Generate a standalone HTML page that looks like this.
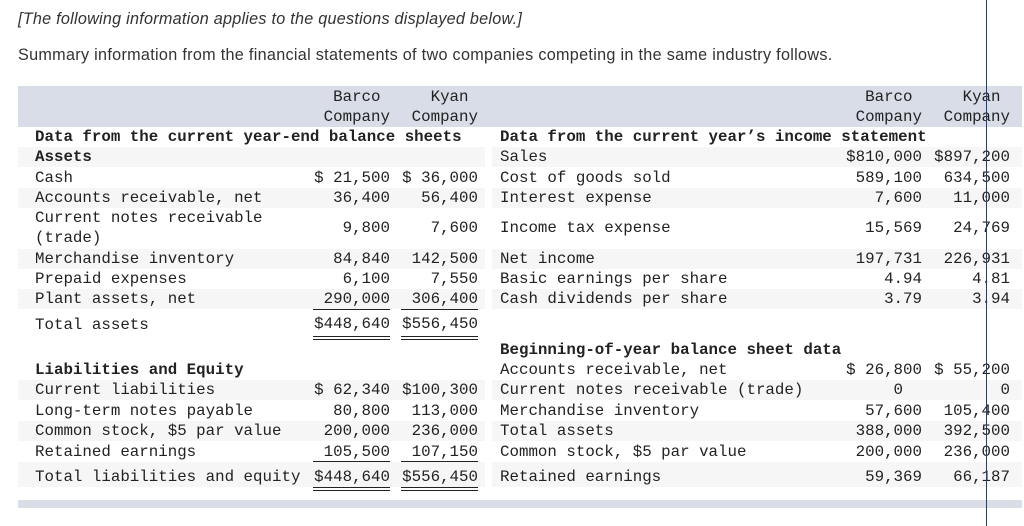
<!DOCTYPE html>
<html><head><meta charset="utf-8"><style>
body{margin:0;width:1024px;height:526px;background:#fff;position:relative;overflow:hidden;font-family:"Liberation Mono",monospace;font-size:15.8px;color:#222}
div,span{position:absolute}
.t{line-height:20px;white-space:pre}
.r{text-align:right;line-height:20px;white-space:pre}
.b{font-weight:bold}
.band{background:#d9dde8}
.sh{background:#f6f6f6;height:20px}
.u{border-top:1px solid #222;height:0}
.d{border-top:1px solid #222;border-bottom:1px solid #222;height:2px}
.s{font-family:"Liberation Sans",sans-serif;color:#333;white-space:nowrap}
</style></head><body>
<div class="s" style="left:18px;top:10px;font-size:16.2px;letter-spacing:0.25px;font-style:italic">[The following information applies to the questions displayed below.]</div>
<div class="s" style="left:18px;top:46px;font-size:16.2px;letter-spacing:0.3px">Summary information from the financial statements of two companies competing in the same industry follows.</div>

<div class="band" style="left:18px;top:86px;width:1004px;height:41px"></div>
<div class="band" style="left:18px;top:500px;width:1004px;height:8px"></div>

<div class="sh" style="left:18px;top:147px;width:467px"></div>
<div class="sh" style="left:18px;top:188px;width:467px"></div>
<div class="sh" style="left:18px;top:249px;width:467px"></div>
<div class="sh" style="left:18px;top:289px;width:467px"></div>
<div class="sh" style="left:18px;top:380px;width:467px"></div>
<div class="sh" style="left:18px;top:421px;width:467px"></div>
<div class="sh" style="left:18px;top:462px;width:467px;height:25px"></div>
<div class="sh" style="left:492px;top:147px;width:530px"></div>
<div class="sh" style="left:492px;top:188px;width:530px"></div>
<div class="sh" style="left:492px;top:249px;width:530px"></div>
<div class="sh" style="left:492px;top:289px;width:530px"></div>
<div class="sh" style="left:492px;top:380px;width:530px"></div>
<div class="sh" style="left:492px;top:421px;width:530px"></div>
<div class="sh" style="left:492px;top:462px;width:530px;height:25px"></div>

<div class="r" style="right:634px;top:87px">Barco </div>
<div class="r" style="right:546px;top:87px">Kyan </div>
<div class="r" style="right:634px;top:107px">Company</div>
<div class="r" style="right:546px;top:107px">Company</div>
<div class="r" style="right:102px;top:87px">Barco </div>
<div class="r" style="right:14px;top:87px">Kyan </div>
<div class="r" style="right:102px;top:107px">Company</div>
<div class="r" style="right:14px;top:107px">Company</div>

<div class="t b" style="left:35px;top:127px">Data from the current year-end balance sheets</div>
<div class="t b" style="left:35px;top:147px">Assets</div>
<div class="t" style="left:35px;top:168px">Cash</div>
<div class="r" style="right:634px;top:168px">$ 21,500</div><div class="r" style="right:546px;top:168px">$ 36,000</div>
<div class="t" style="left:35px;top:188px">Accounts receivable, net</div>
<div class="r" style="right:634px;top:188px">36,400</div><div class="r" style="right:546px;top:188px">56,400</div>
<div class="t" style="left:35px;top:208px">Current notes receivable
(trade)</div>
<div class="r" style="right:634px;top:218px">9,800</div><div class="r" style="right:546px;top:218px">7,600</div>
<div class="t" style="left:35px;top:249px">Merchandise inventory</div>
<div class="r" style="right:634px;top:249px">84,840</div><div class="r" style="right:546px;top:249px">142,500</div>
<div class="t" style="left:35px;top:269px">Prepaid expenses</div>
<div class="r" style="right:634px;top:269px">6,100</div><div class="r" style="right:546px;top:269px">7,550</div>
<div class="t" style="left:35px;top:289px">Plant assets, net</div>
<div class="r" style="right:634px;top:289px">290,000</div><div class="r" style="right:546px;top:289px">306,400</div>
<div class="u" style="left:313px;top:309px;width:77px"></div><div class="u" style="left:401px;top:309px;width:77px"></div>
<div class="t" style="left:35px;top:315px">Total assets</div>
<div class="r" style="right:634px;top:314px">$448,640</div><div class="r" style="right:546px;top:314px">$556,450</div>
<div class="d" style="left:313px;top:336px;width:77px"></div><div class="d" style="left:401px;top:336px;width:77px"></div>

<div class="t b" style="left:35px;top:360px">Liabilities and Equity</div>
<div class="t" style="left:35px;top:380px">Current liabilities</div>
<div class="r" style="right:634px;top:380px">$ 62,340</div><div class="r" style="right:546px;top:380px">$100,300</div>
<div class="t" style="left:35px;top:401px">Long-term notes payable</div>
<div class="r" style="right:634px;top:401px">80,800</div><div class="r" style="right:546px;top:401px">113,000</div>
<div class="t" style="left:35px;top:421px">Common stock, $5 par value</div>
<div class="r" style="right:634px;top:421px">200,000</div><div class="r" style="right:546px;top:421px">236,000</div>
<div class="t" style="left:35px;top:442px">Retained earnings</div>
<div class="r" style="right:634px;top:442px">105,500</div><div class="r" style="right:546px;top:442px">107,150</div>
<div class="u" style="left:313px;top:461px;width:77px"></div><div class="u" style="left:401px;top:461px;width:77px"></div>
<div class="t" style="left:35px;top:467px">Total liabilities and equity</div>
<div class="r" style="right:634px;top:467px">$448,640</div><div class="r" style="right:546px;top:467px">$556,450</div>
<div class="d" style="left:313px;top:487px;width:77px"></div><div class="d" style="left:401px;top:487px;width:77px"></div>

<div class="t b" style="left:500px;top:127px">Data from the current year’s income statement</div>
<div class="t" style="left:500px;top:147px">Sales</div>
<div class="r" style="right:102px;top:147px">$810,000</div><div class="r" style="right:14px;top:147px">$897,200</div>
<div class="t" style="left:500px;top:168px">Cost of goods sold</div>
<div class="r" style="right:102px;top:168px">589,100</div><div class="r" style="right:14px;top:168px">634,500</div>
<div class="t" style="left:500px;top:188px">Interest expense</div>
<div class="r" style="right:102px;top:188px">7,600</div><div class="r" style="right:14px;top:188px">11,000</div>
<div class="t" style="left:500px;top:218px">Income tax expense</div>
<div class="r" style="right:102px;top:218px">15,569</div><div class="r" style="right:14px;top:218px">24,769</div>
<div class="t" style="left:500px;top:249px">Net income</div>
<div class="r" style="right:102px;top:249px">197,731</div><div class="r" style="right:14px;top:249px">226,931</div>
<div class="t" style="left:500px;top:269px">Basic earnings per share</div>
<div class="r" style="right:102px;top:269px">4.94</div><div class="r" style="right:14px;top:269px">4.81</div>
<div class="t" style="left:500px;top:289px">Cash dividends per share</div>
<div class="r" style="right:102px;top:289px">3.79</div><div class="r" style="right:14px;top:289px">3.94</div>

<div class="t b" style="left:500px;top:340px">Beginning-of-year balance sheet data</div>
<div class="t" style="left:500px;top:360px">Accounts receivable, net</div>
<div class="r" style="right:102px;top:360px">$ 26,800</div><div class="r" style="right:14px;top:360px">$ 55,200</div>
<div class="t" style="left:500px;top:380px">Current notes receivable (trade)</div>
<div class="r" style="right:102px;top:380px">0  </div><div class="r" style="right:14px;top:380px">0</div>
<div class="t" style="left:500px;top:401px">Merchandise inventory</div>
<div class="r" style="right:102px;top:401px">57,600</div><div class="r" style="right:14px;top:401px">105,400</div>
<div class="t" style="left:500px;top:421px">Total assets</div>
<div class="r" style="right:102px;top:421px">388,000</div><div class="r" style="right:14px;top:421px">392,500</div>
<div class="t" style="left:500px;top:442px">Common stock, $5 par value</div>
<div class="r" style="right:102px;top:442px">200,000</div><div class="r" style="right:14px;top:442px">236,000</div>
<div class="t" style="left:500px;top:467px">Retained earnings</div>
<div class="r" style="right:102px;top:467px">59,369</div><div class="r" style="right:14px;top:467px">66,187</div>

<div style="left:986px;top:0;width:1px;height:526px;background:#1e3f78"></div>
</body></html>
